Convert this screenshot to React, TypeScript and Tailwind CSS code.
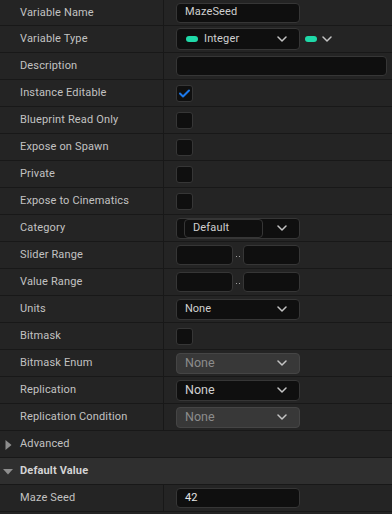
import React from "react";

const Chevron = ({ className = "" }: { className?: string }) => (
  <svg width="10" height="6" viewBox="0 0 10 6" className={className} fill="none">
    <path d="M1 1 L5 5 L9 1" stroke="#c4c4c4" strokeWidth="1.5" strokeLinecap="round" strokeLinejoin="round" />
  </svg>
);

const Pill = () => <span className="inline-block w-[12px] h-[6px] rounded-full bg-[#1fd9a8]" />;

const Row = ({
  label,
  children,
  first = false,
}: {
  label: string;
  children?: React.ReactNode;
  first?: boolean;
}) => (
  <div className={`flex border-b border-[#181818] ${first ? "h-[26px]" : "h-[27px]"}`}>
    <div className="w-[164px] shrink-0 border-r border-[#181818] flex items-center pl-[20px] pt-[1px] text-[11px] tracking-[0.15px] text-[#c2c2c2]">
      {label}
    </div>
    <div className="flex-1 flex items-center pl-[12px]">{children}</div>
  </div>
);

const Box = ({ w, children, className = "" }: { w: string; children?: React.ReactNode; className?: string }) => (
  <div className={`${w} h-[20px] rounded-[4px] bg-[#0f0f0f] border border-[#363636] flex items-center ${className}`}>
    {children}
  </div>
);

const Check = ({ checked = false }: { checked?: boolean }) => (
  <div className="w-[17px] h-[17px] rounded-[3px] bg-[#0f0f0f] border border-[#363636] flex items-center justify-center">
    {checked && (
      <svg width="11" height="9" viewBox="0 0 11 9" fill="none">
        <path d="M1 4.5 L4 7.5 L10 1.5" stroke="#1c78ea" strokeWidth="2" strokeLinecap="round" strokeLinejoin="round" />
      </svg>
    )}
  </div>
);

const Range = () => (
  <div className="flex items-center">
    <Box w="w-[57px]" />
    <div className="w-[10px] h-[20px] flex items-center justify-center gap-[2px] pt-[3px]">
      <span className="w-[1px] h-[1px] bg-[#a0a0a0]" />
      <span className="w-[1px] h-[1px] bg-[#a0a0a0]" />
    </div>
    <Box w="w-[57px]" />
  </div>
);

const Dropdown = ({
  text,
  disabled = false,
  big = false,
}: {
  text: string;
  disabled?: boolean;
  big?: boolean;
}) => (
  <div
    className={`w-[124px] h-[21px] rounded-[4px] border flex items-center justify-between pl-[8px] pr-[12px] ${
      disabled ? "bg-[#383838] border-[#454545] text-[#8c8c8c]" : "bg-[#0f0f0f] border-[#363636] text-[#d0d0d0]"
    } ${big ? "text-[12.5px]" : "text-[11px]"}`}
  >
    <span>{text}</span>
    <Chevron />
  </div>
);

export default function App() {
  return (
    <div
      className="w-[392px] h-[514px] overflow-hidden bg-[#242424] select-none"
      style={{ fontFamily: "Roboto, 'Noto Sans', sans-serif" }}
    >
      <Row label="Variable Name" first>
        <Box w="w-[124px]" className="pl-[8px] text-[11px] tracking-[0.15px] text-[#d0d0d0]">
          MazeSeed
        </Box>
      </Row>
      <Row label="Variable Type">
        <div className="w-[124px] h-[22px] rounded-[4px] bg-[#0f0f0f] border border-[#363636] flex items-center pl-[9px] pr-[12px] text-[11px] tracking-[0.15px] text-[#d0d0d0]">
          <Pill />
          <span className="ml-[6px] flex-1">Integer</span>
          <Chevron />
        </div>
        <div className="flex items-center ml-[5px] gap-[5px]">
          <Pill />
          <Chevron />
        </div>
      </Row>
      <Row label="Description">
        <Box w="w-[211px]" />
      </Row>
      <Row label="Instance Editable">
        <Check checked />
      </Row>
      <Row label="Blueprint Read Only">
        <Check />
      </Row>
      <Row label="Expose on Spawn">
        <Check />
      </Row>
      <Row label="Private">
        <Check />
      </Row>
      <Row label="Expose to Cinematics">
        <Check />
      </Row>
      <Row label="Category">
        <div className="w-[124px] h-[21px] rounded-[4px] bg-[#0f0f0f] border border-[#363636] flex items-center pl-[7px] pr-[12px]">
          <div className="w-[79px] h-[19px] rounded-[4px] bg-[#0f0f0f] border border-[#363636] flex items-center pl-[8px] text-[11px] tracking-[0.15px] text-[#d0d0d0]">
            Default
          </div>
          <div className="flex-1" />
          <Chevron />
        </div>
      </Row>
      <Row label="Slider Range">
        <Range />
      </Row>
      <Row label="Value Range">
        <Range />
      </Row>
      <Row label="Units">
        <Dropdown text="None" />
      </Row>
      <Row label="Bitmask">
        <Check />
      </Row>
      <Row label="Bitmask Enum">
        <Dropdown text="None" disabled big />
      </Row>
      <Row label="Replication">
        <Dropdown text="None" big />
      </Row>
      <Row label="Replication Condition">
        <Dropdown text="None" disabled big />
      </Row>
      <div className="h-[27px] border-b border-[#181818] flex items-center pl-[5px] pt-[1px] text-[11px] tracking-[0.15px] text-[#c2c2c2]">
        <svg width="7" height="10" viewBox="0 0 7 10" className="mr-[8px]">
          <path d="M0.5 0 L6.5 5 L0.5 10 Z" fill="#8e8e8e" />
        </svg>
        Advanced
      </div>
      <div className="h-[27px] border-b border-[#181818] bg-[#2f2f2f] flex items-center pl-[3px] pt-[1px] text-[11px] tracking-[0.15px] font-bold text-[#d4d4d4]">
        <svg width="10" height="6" viewBox="0 0 10 6" className="mr-[7px]">
          <path d="M0 0 L10 0 L5 5.5 Z" fill="#8e8e8e" />
        </svg>
        Default Value
      </div>
      <Row label="Maze Seed">
        <Box w="w-[124px]" className="pl-[8px] text-[11px] text-[#e6e6e6]">
          42
        </Box>
      </Row>
    </div>
  );
}
